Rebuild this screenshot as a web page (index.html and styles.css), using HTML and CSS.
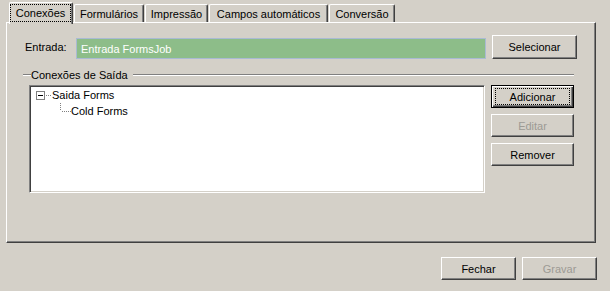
FILE: index.html
```html
<!DOCTYPE html>
<html lang="pt">
<head>
<meta charset="utf-8">
<title>Conexões</title>
<link rel="stylesheet" href="styles.css">
</head>
<body>
<div class="window">
  <div class="tabs">
    <div class="tab active"><span class="tab-focus">Conexões</span></div>
    <div class="tab">Formulários</div>
    <div class="tab">Impressão</div>
    <div class="tab">Campos automáticos</div>
    <div class="tab">Conversão</div>
  </div>
  <div class="panel">
    <div class="entry-row">
      <span class="entry-label">Entrada:</span>
      <div class="entry-field">Entrada FormsJob</div>
      <button class="btn btn-select">Selecionar</button>
    </div>
    <div class="group">
      <div class="group-title"><span class="group-text">Conexões de Saída</span></div>
      <div class="group-body">
        <div class="tree">
          <div class="tree-row">
            <svg class="tree-root-icon" width="16" height="16" viewBox="0 0 16 16">
              <rect x="0.5" y="4.5" width="8" height="8" fill="#fff" stroke="#808080"/>
              <line x1="2" y1="8.5" x2="7" y2="8.5" stroke="#000"/>
              <line x1="10" y1="8.5" x2="16" y2="8.5" stroke="#808080" stroke-dasharray="1 1"/>
            </svg>
            <span class="tree-text">Saida Forms</span>
          </div>
          <div class="tree-row tree-child">
            <svg class="tree-child-icon" width="11" height="16" viewBox="0 0 11 16">
              <line x1="0.5" y1="0" x2="0.5" y2="8" stroke="#808080" stroke-dasharray="1 1"/>
              <line x1="2" y1="8.5" x2="11" y2="8.5" stroke="#808080" stroke-dasharray="1 1"/>
            </svg>
            <span class="tree-text">Cold Forms</span>
          </div>
        </div>
        <div class="side-buttons">
          <button class="btn btn-side btn-default"><span class="btn-focus">Adicionar</span></button>
          <button class="btn btn-side" disabled>Editar</button>
          <button class="btn btn-side">Remover</button>
        </div>
      </div>
    </div>
  </div>
  <div class="footer">
    <button class="btn btn-footer">Fechar</button>
    <button class="btn btn-footer" disabled>Gravar</button>
  </div>
</div>
</body>
</html>
```
FILE: styles.css
```css
html, body {
  margin: 0;
  padding: 0;
}
body {
  background: #d4d0c8;
  font-family: "Liberation Sans", Arial, sans-serif;
  font-size: 11px;
  color: #000;
  width: 610px;
  height: 291px;
  overflow: hidden;
}
.window {
  padding: 0 14px 0 6px;
}

/* Tabs */
.tabs {
  display: flex;
  align-items: flex-end;
  height: 22px;
  padding-left: 3px;
}
.tab {
  box-sizing: border-box;
  height: 18px;
  border: 1px solid #fff;
  border-bottom: 0;
  border-right-color: #404040;
  box-shadow: inset -1px 0 #808080;
  border-radius: 2px 2px 0 0;
  margin-right: 1px;
  display: flex;
  align-items: center;
  justify-content: center;
  background: #d4d0c8;
  white-space: nowrap;
}
.tab:nth-child(1) { width: 64px; }
.tab:nth-child(2) { width: 70px; }
.tab:nth-child(3) { width: 63px; }
.tab:nth-child(4) { width: 119px; }
.tab:nth-child(5) { width: 66px; }
.tab.active {
  height: 22px;
  margin-bottom: -2px;
  position: relative;
  z-index: 1;
  align-items: flex-start;
  padding: 1px 1px 0 0;
}
.tab-focus {
  flex: 1;
  box-sizing: border-box;
  height: 18px;
  border: 1px dotted #000;
  display: flex;
  align-items: center;
  justify-content: center;
}

/* Panel */
.panel {
  box-sizing: border-box;
  height: 221px;
  border: 1px solid;
  border-color: #fff #404040 #404040 #fff;
  box-shadow: inset -1px -1px #808080;
  padding: 12px 18px 0 16px;
}
.entry-row {
  display: flex;
  align-items: flex-end;
  height: 24px;
  padding-left: 2px;
}
.entry-label {
  width: 51px;
  align-self: center;
}
.entry-field {
  box-sizing: border-box;
  width: 410px;
  height: 21px;
  background: #8dbd89;
  border: 1px solid #a9bad3;
  color: #fff;
  padding-left: 4px;
  display: flex;
  align-items: center;
}

/* Buttons */
.btn {
  box-sizing: border-box;
  font: inherit;
  color: #000;
  background: #d4d0c8;
  border: 1px solid;
  border-color: #fff #404040 #404040 #fff;
  box-shadow: inset -1px -1px #808080;
  padding: 0;
  margin: 0;
  display: flex;
  align-items: center;
  justify-content: center;
}
.btn:disabled {
  color: #9c9a94;
}
.btn-select {
  width: 85px;
  height: 24px;
  margin-left: 6px;
}
.btn-side {
  width: 83px;
  height: 23px;
}
.btn-default {
  border: 1px solid #000;
  box-shadow: inset 1px 1px #fff, inset -1px -1px #404040, inset -2px -2px #808080;
  align-items: stretch;
}
.btn-focus {
  flex: 1;
  margin: 2px 3px 2px 3px;
  border: 1px dotted #000;
  display: flex;
  align-items: center;
  justify-content: center;
}
.footer {
  display: flex;
  justify-content: flex-end;
  gap: 6px;
  margin-top: 14px;
  margin-right: -1px;
}
.btn-footer {
  width: 75px;
  height: 23px;
}

/* Group */
.group {
  margin: 9px 3px 0 0;
}
.group-title {
  display: flex;
  align-items: center;
  height: 14px;
}
.group-title::before,
.group-title::after {
  content: "";
  height: 0;
  border-top: 1px solid #808080;
  border-bottom: 1px solid #fff;
}
.group-title::before {
  width: 8px;
}
.group-title::after {
  flex: 1;
}
.group-text {
  padding: 0 5px 0 0;
}
.group-body {
  display: flex;
  gap: 6px;
  margin-top: 3px;
  padding-left: 6px;
}

/* Tree */
.tree {
  box-sizing: border-box;
  width: 457px;
  height: 108px;
  background: #fff;
  border: 1px solid;
  border-color: #808080 #fff #fff #808080;
  box-shadow: inset 1px 1px #404040, inset -1px -1px #d4d0c8;
  padding: 1px 0 0 6px;
}
.tree-row {
  display: flex;
  align-items: center;
  height: 16px;
}
.tree-row svg {
  display: block;
  overflow: visible;
  flex: none;
}
.tree-child {
  padding-left: 24px;
}
.side-buttons {
  display: flex;
  flex-direction: column;
  gap: 6px;
}
```
